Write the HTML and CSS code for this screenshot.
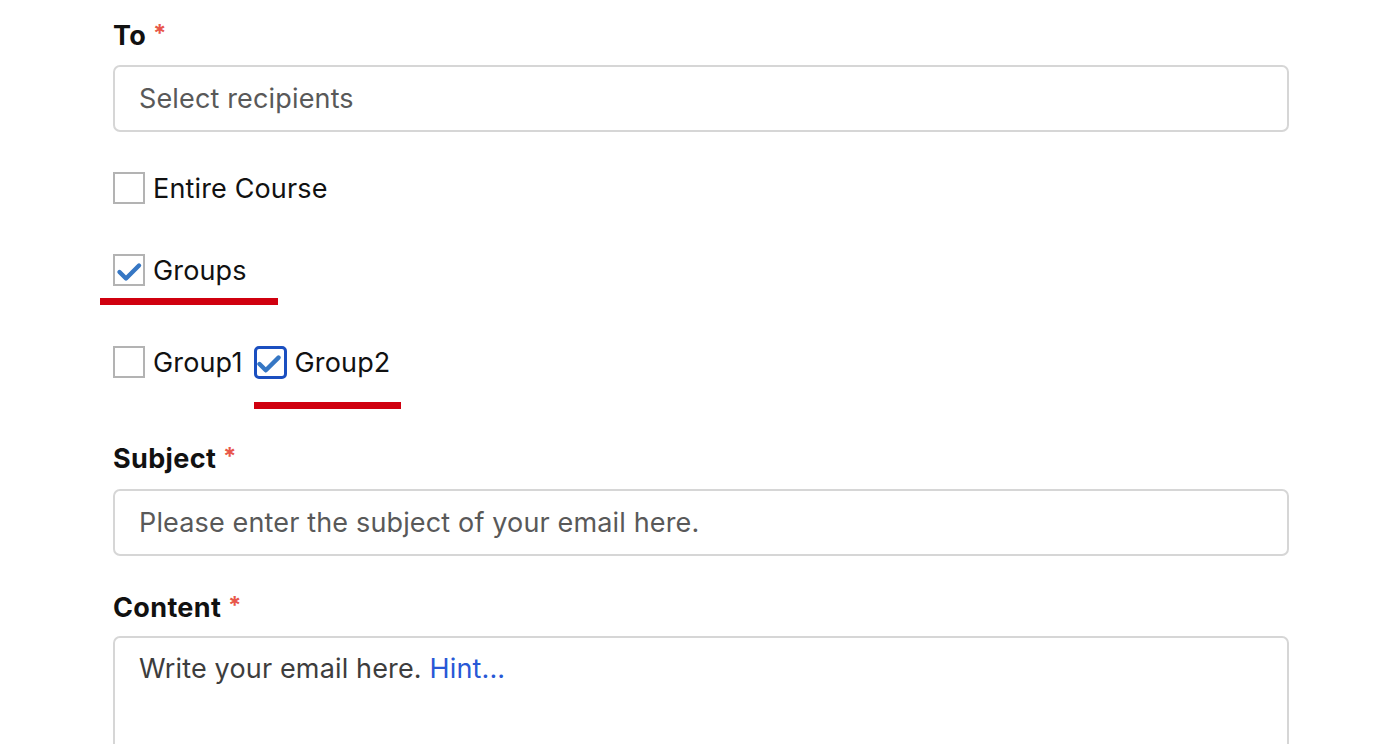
FILE: index.html
```html
<!DOCTYPE html>
<html>
<head>
<meta charset="utf-8">
<link rel="stylesheet" href="styles.css">
</head>
<body>
<form class="form">
  <div class="label label-to">To <span class="req">*</span></div>
  <div class="input">Select recipients</div>

  <div class="check-row row-entire">
    <label class="check"><span class="box"></span><span class="check-text">Entire Course</span></label>
  </div>

  <div class="check-row row-groups">
    <label class="check marked"><span class="box checked"><svg viewBox="2 2 28 28" class="tick"><path d="M6.5 18 L13 24.5 L26 11.5" /></svg></span><span class="check-text">Groups</span></label>
    <span class="redline redline-groups"></span>
  </div>

  <div class="check-row row-sub">
    <label class="check"><span class="box"></span><span class="check-text">Group1</span></label>
    <label class="check marked"><span class="box checked focused"><svg viewBox="3 3 27 27" class="tick tick-focused"><path d="M5.5 18 L11.8 24.3 L24.5 11.6" /></svg></span><span class="check-text">Group2</span><span class="redline redline-g2"></span></label>
  </div>

  <div class="label label-subject">Subject <span class="req">*</span></div>
  <div class="input">Please enter the subject of your email here.</div>

  <div class="label label-content">Content <span class="req">*</span></div>
  <div class="textarea">Write your email here. <span class="hint">Hint...</span></div>
</form>
</body>
</html>
```
FILE: styles.css
```css
html, body {
  margin: 0;
  padding: 0;
  background: #ffffff;
}
body {
  font-family: Inter, "Noto Sans", "Liberation Sans", sans-serif;
  color: #111111;
  overflow: hidden;
  height: 744px;
  letter-spacing: 0.15px;
}
.form {
  width: 1176px;
  margin-left: 113px;
  display: flex;
  flex-direction: column;
  padding-top: 17px;
}
.label {
  font-size: 27px;
  font-weight: 700;
  line-height: 34px;
  color: #111;
  letter-spacing: 0.35px;
}
.req {
  color: #e8574a;
  font-size: 24px;
  vertical-align: 3px;
}
.label-to { margin-bottom: 12px; }
.input {
  box-sizing: border-box;
  height: 67px;
  border: 2px solid #d6d6d6;
  border-radius: 7px;
  padding: 0 24px;
  display: flex;
  align-items: center;
  font-size: 27px;
  color: #595959;
}
.check-row {
  position: relative;
  display: flex;
  align-items: center;
  gap: 11px;
  height: 32px;
}
.row-entire { margin-top: 40px; }
.row-groups { margin-top: 50px; }
.row-sub { margin-top: 60px; }
.check {
  position: relative;
  display: flex;
  align-items: center;
  gap: 8px;
  font-size: 27px;
  color: #111;
}
.box {
  box-sizing: border-box;
  width: 32px;
  height: 32px;
  border: 2px solid #b3b3b3;
  background: #fff;
  display: flex;
  align-items: center;
  justify-content: center;
}
.box.focused {
  border: 3px solid #1b4fc0;
  border-radius: 5px;
  width: 33px;
  height: 33px;
}
.tick {
  width: 28px;
  height: 28px;
  display: block;
}
.tick-focused {
  width: 27px;
  height: 27px;
}
.tick path {
  fill: none;
  stroke: #3677c4;
  stroke-width: 4.4;
  stroke-linecap: round;
  stroke-linejoin: round;
}
.redline {
  position: absolute;
  height: 7px;
  background: #d0000f;
}
.redline-groups {
  left: -13px;
  width: 178px;
  top: 44px;
}
.redline-g2 {
  left: 0;
  width: 147px;
  top: 56px;
}
.label-subject { margin-top: 62px; margin-bottom: 13px; }
.label-content { margin-top: 33px; margin-bottom: 11px; }
.textarea {
  box-sizing: border-box;
  height: 140px;
  border: 2px solid #d6d6d6;
  border-radius: 7px;
  padding: 14px 24px;
  font-size: 27px;
  line-height: 34px;
  color: #3d3d3d;
}
.hint { color: #2858d6; }
```
